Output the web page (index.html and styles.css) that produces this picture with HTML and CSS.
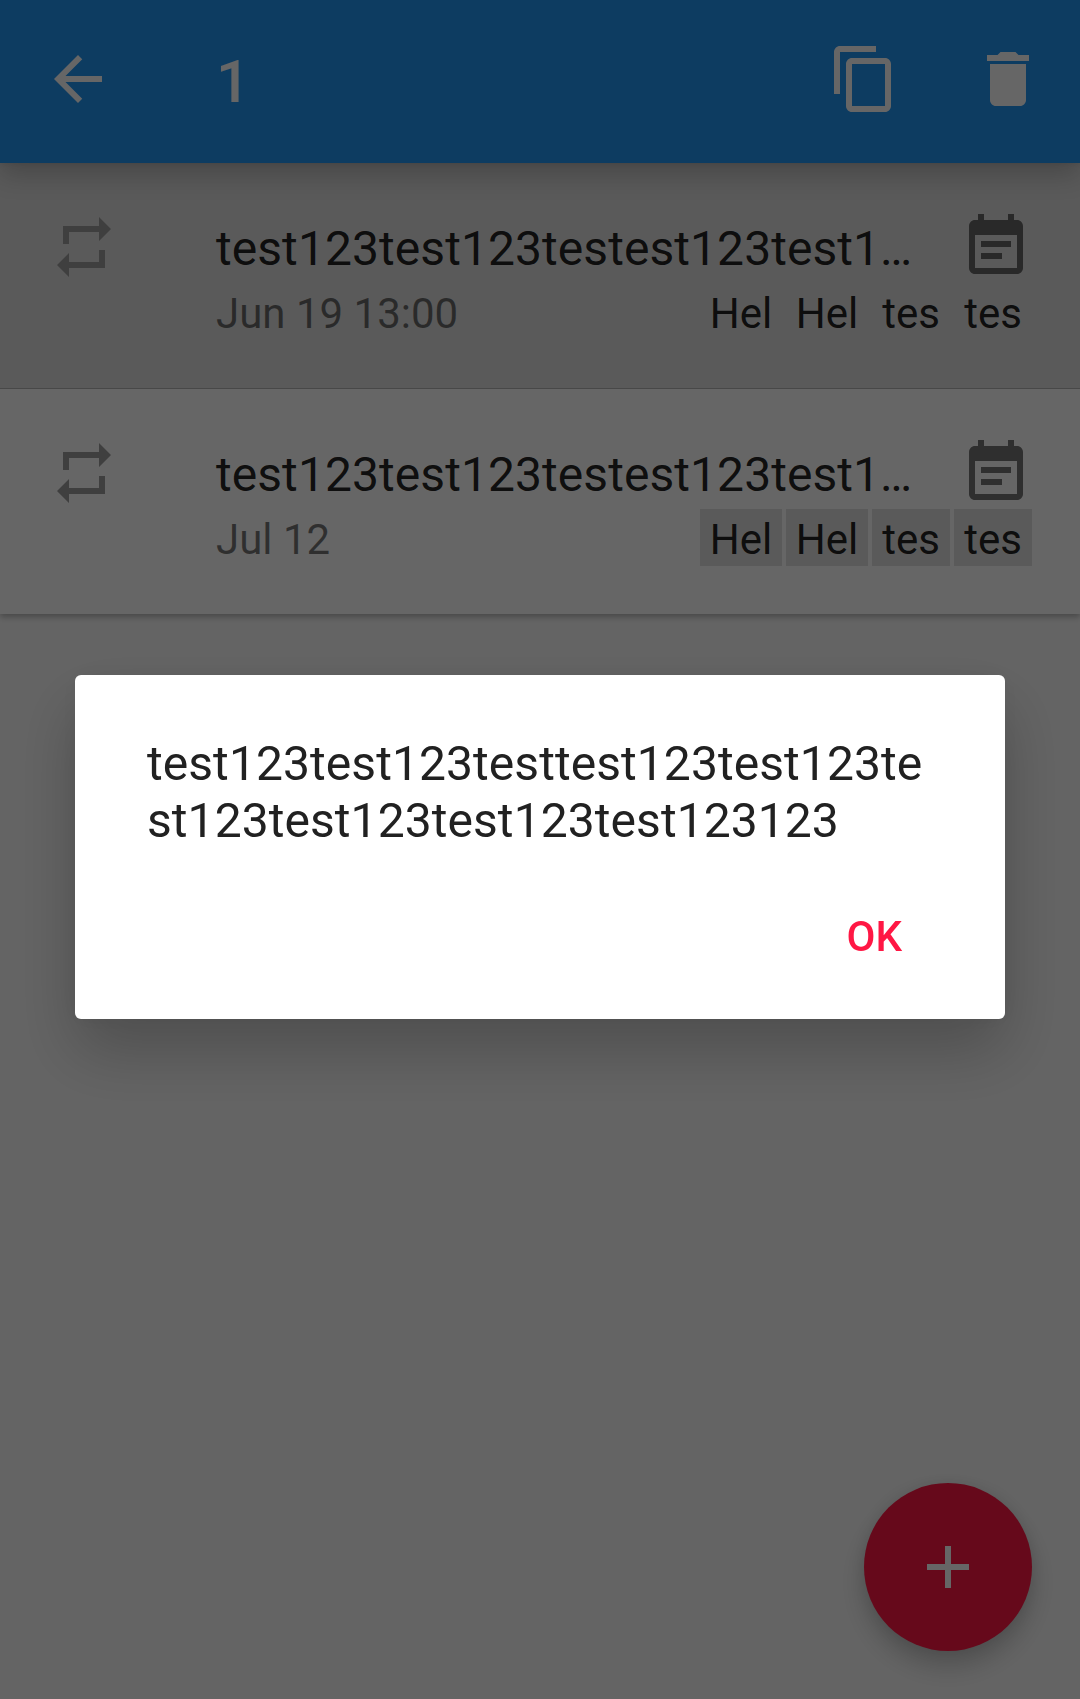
FILE: index.html
```html
<!DOCTYPE html>
<html lang="en">
<head>
<meta charset="utf-8">
<title>Notes</title>
<link rel="stylesheet" href="styles.css">
</head>
<body>
<svg class="defs" aria-hidden="true">
  <symbol id="repeat" viewBox="0 0 24 24"><path d="M7 7h10v3l4-4-4-4v3H5v6h2V7zm10 10H7v-3l-4 4 4 4v-3h12v-6h-2v4z"/></symbol>
  <symbol id="note" viewBox="0 0 24 24"><path d="M17 10H7v2h10v-2zm2-7h-1V1h-2v2H8V1H6v2H5c-1.11 0-1.99.9-1.99 2L3 19c0 1.1.89 2 2 2h14c1.1 0 2-.9 2-2V5c0-1.1-.9-2-2-2zm0 16H5V8h14v11zm-5-5H7v2h7v-2z"/></symbol>
</svg>
<div class="app">
  <header class="toolbar">
    <svg class="icon" viewBox="0 0 24 24"><path d="M20 11H7.83l5.59-5.59L12 4l-8 8 8 8 1.41-1.41L7.83 13H20v-2z"/></svg>
    <h1 class="count">1</h1>
    <svg class="icon" viewBox="0 0 24 24"><path d="M16 1H4c-1.1 0-2 .9-2 2v14h2V3h12V1zm3 4H8c-1.1 0-2 .9-2 2v14c0 1.1.9 2 2 2h11c1.1 0 2-.9 2-2V7c0-1.1-.9-2-2-2zm0 16H8V7h11v14z"/></svg>
    <svg class="icon" viewBox="0 0 24 24"><path d="M6 19c0 1.1.9 2 2 2h8c1.1 0 2-.9 2-2V7H6v12zM19 4h-3.5l-1-1h-5l-1 1H5v2h14V4z"/></svg>
  </header>
  <main class="list">
    <article class="row selected">
      <svg class="icon repeat"><use href="#repeat"/></svg>
      <div class="body">
        <div class="line">
          <span class="title">test123test123testest123test1…</span>
          <svg class="icon note"><use href="#note"/></svg>
        </div>
        <div class="line">
          <span class="date">Jun 19 13:00</span>
          <div class="tags"><span class="tag">Hel</span><span class="tag">Hel</span><span class="tag">tes</span><span class="tag">tes</span></div>
        </div>
      </div>
    </article>
    <article class="row">
      <svg class="icon repeat"><use href="#repeat"/></svg>
      <div class="body">
        <div class="line">
          <span class="title">test123test123testest123test1…</span>
          <svg class="icon note"><use href="#note"/></svg>
        </div>
        <div class="line">
          <span class="date">Jul 12</span>
          <div class="tags"><span class="tag">Hel</span><span class="tag">Hel</span><span class="tag">tes</span><span class="tag">tes</span></div>
        </div>
      </div>
    </article>
  </main>
  <button class="fab" aria-label="Add"><svg class="icon" viewBox="0 0 24 24"><path d="M19 13h-6v6h-2v-6H5v-2h6V5h2v6h6v2z"/></svg></button>
</div>
<div class="scrim">
  <div class="dialog" role="dialog">
    <p class="message">test123test123testtest123test123test123test123test123test123123</p>
    <div class="actions"><button class="ok">OK</button></div>
  </div>
</div>
</body>
</html>
```
FILE: styles.css
```css
* { box-sizing: border-box; }

body {
  margin: 0;
  font-family: Roboto, sans-serif;
  background: #fafafa;
}

.defs { display: none; }

.app {
  position: relative;
  z-index: 0;
  height: 1699px;
  overflow: hidden;
  background: #fafafa;
}

.icon {
  display: block;
  flex: none;
  width: 72px;
  height: 72px;
  fill: currentColor;
}

/* Toolbar */
.toolbar {
  position: relative;
  z-index: 1;
  display: flex;
  align-items: flex-start;
  gap: 72px;
  height: 163px;
  padding: 43px 36px 0 42px;
  background: #2196f3;
  color: #fff;
  box-shadow: 0 12px 24px rgba(0, 0, 0, .2), 0 0 6px rgba(0, 0, 0, .1);
}

.count {
  flex: 1;
  margin: 0 0 0 30px;
  font-size: 60px;
  font-weight: 500;
  line-height: 77px;
}

/* List */
.list {
  background: #fff;
  box-shadow: 0 3px 6px rgba(0, 0, 0, .28);
}

.row {
  display: flex;
  gap: 96px;
  height: 225px;
  padding: 48px;
  background: #fff;
}

.row.selected {
  height: 226px;
  background: #e0e0e0;
  border-bottom: 1px solid #b4b4b4;
}

.repeat { color: #9e9e9e; }
.note { color: rgba(0, 0, 0, .54); }

.body { flex: 1; min-width: 0; }

.line {
  display: flex;
  justify-content: space-between;
}

.title {
  padding-top: 9px;
  font-size: 48px;
  line-height: 57px;
  letter-spacing: .065px;
  white-space: nowrap;
  color: rgba(0, 0, 0, .87);
}

.date,
.tag {
  padding-top: 6px;
  font-size: 42px;
  line-height: 49px;
}

.date { color: rgba(0, 0, 0, .54); }

.tags { display: flex; gap: 4px; }

.tag {
  width: 82px;
  height: 57px;
  text-align: center;
  color: rgba(0, 0, 0, .87);
  background: #e0e0e0;
}

.tag:nth-child(n + 3) { width: 78px; }

.fab {
  position: absolute;
  right: 48px;
  bottom: 48px;
  display: grid;
  place-items: center;
  width: 168px;
  height: 168px;
  padding: 0;
  border: 0;
  border-radius: 50%;
  background: #ff1744;
  color: #fff;
  box-shadow: 0 15px 26px rgba(0, 0, 0, .2), 0 0 15px rgba(0, 0, 0, .08);
}

/* Dialog */
.scrim {
  position: fixed;
  z-index: 1;
  inset: 0;
  display: flex;
  align-items: center;
  justify-content: center;
  padding: 0 75px 5px;
  background: rgba(0, 0, 0, .6);
}

.dialog {
  width: 930px;
  height: 344px;
  padding: 60px 72px 0;
  border-radius: 6px;
  background: #fff;
  box-shadow: 0 32px 64px rgba(0, 0, 0, .22), 0 0 24px rgba(0, 0, 0, .06);
}

.message {
  margin: 0;
  font-size: 48px;
  line-height: 57px;
  letter-spacing: .065px;
  color: #212121;
  word-break: break-all;
}

.actions {
  display: flex;
  justify-content: flex-end;
  padding: 52px 31px 0 0;
}

.ok {
  padding: 0;
  border: 0;
  background: none;
  font: 500 42px/72px Roboto, sans-serif;
  color: #ff1744;
}
```
